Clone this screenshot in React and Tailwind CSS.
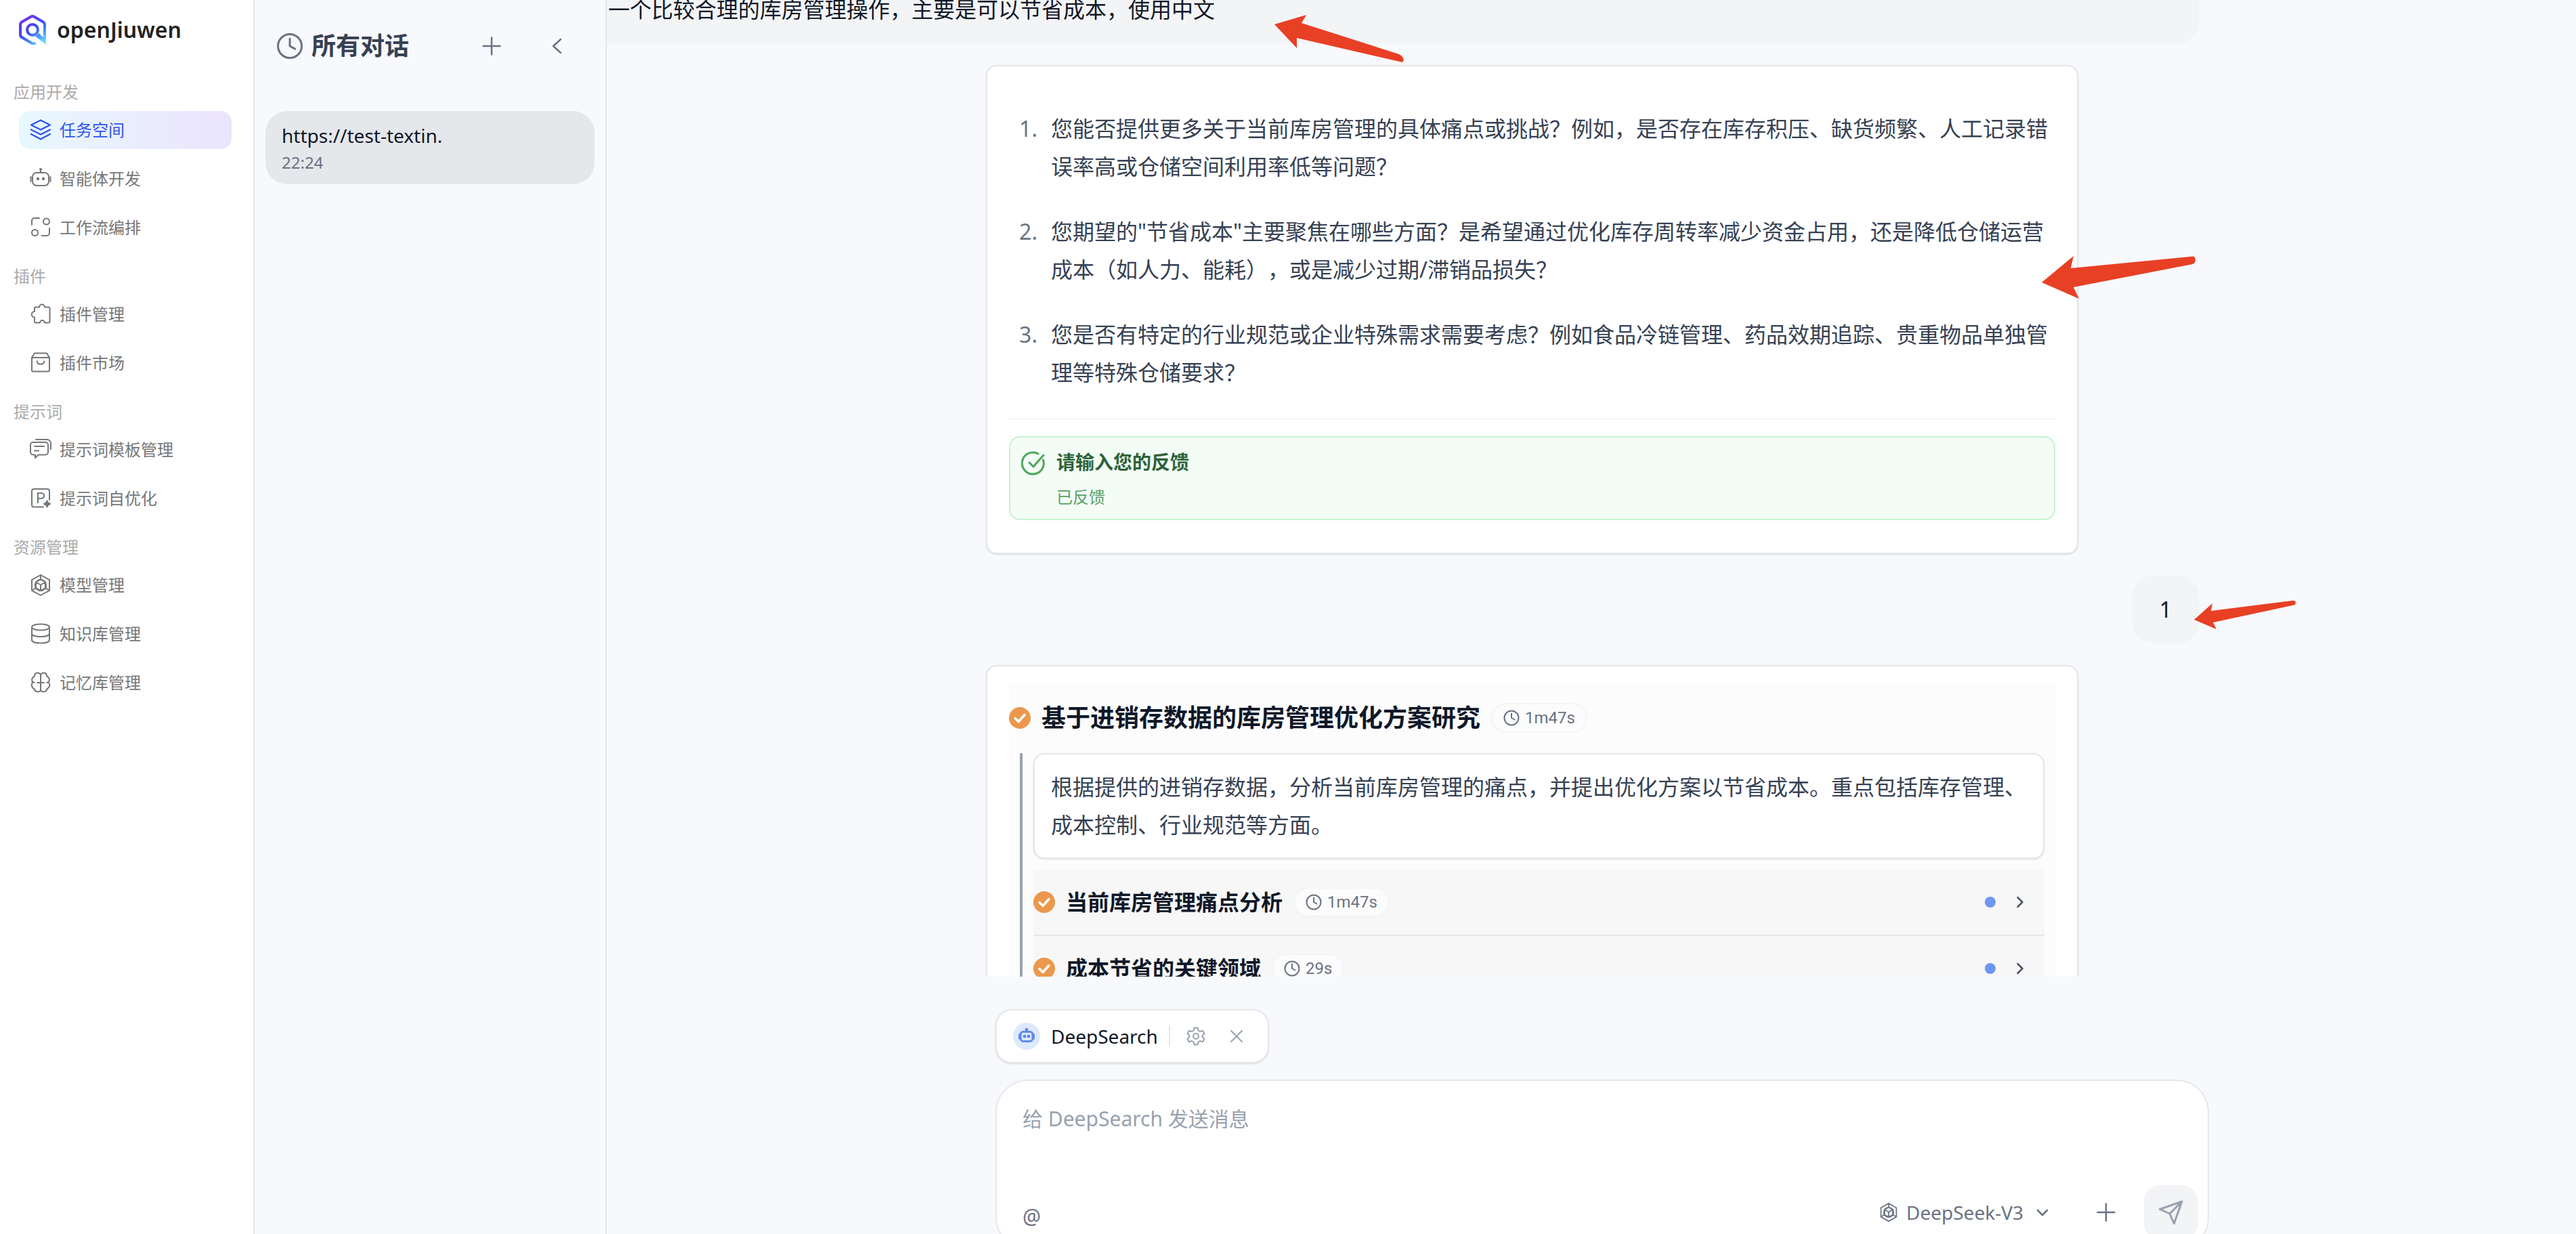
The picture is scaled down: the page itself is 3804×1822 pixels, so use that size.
import { useState } from 'react';
import clsx from 'clsx';

const Icon = ({ className = 'size-8', box = 32, width = 2, children }) => (
  <svg
    className={clsx('shrink-0', className)}
    viewBox={`0 0 ${box} ${box}`}
    fill="none"
    stroke="currentColor"
    strokeWidth={width}
    strokeLinecap="round"
    strokeLinejoin="round"
    aria-hidden="true"
  >
    {children}
  </svg>
);

const LayersIcon = () => (
  <Icon width={2.4}>
    <path d="M16 1.5 30 8.5 16 15.5 2 8.5Z" />
    <path d="m2 15.5 14 7 14-7" />
    <path d="m2 22 14 7.5L30 22" />
  </Icon>
);

const BotIcon = (props) => (
  <Icon {...props}>
    <rect x="4" y="7" width="24" height="19" rx="6" />
    <path d="M16 2v5M1.5 13v7M30.5 13v7" />
    <circle cx="16" cy="2" r="1" fill="currentColor" />
    <rect x="11" y="15" width="2" height="2" />
    <rect x="19" y="15" width="2" height="2" />
  </Icon>
);

const FlowIcon = () => (
  <Icon>
    <path d="M3 12V6a4 4 0 0 1 4-4h7M29 17v7a4 4 0 0 1-4 4h-7" />
    <circle cx="24.5" cy="7" r="4.5" />
    <circle cx="7.5" cy="23.5" r="4.5" />
  </Icon>
);

const PuzzleIcon = () => (
  <Icon>
    <path d="M7 12V7a1.5 1.5 0 0 1 1.5-1.5H14a4 4 0 0 1 8 0h6A1.5 1.5 0 0 1 29.5 7v20a1.5 1.5 0 0 1-1.5 1.5h-6a3.5 3.5 0 0 0-7 0H8.500A1.500 1.500 0 0 1 7 27v-6.500a4.200 4.200 0 0 1 0-8.500Z" />
  </Icon>
);

const StoreIcon = () => (
  <Icon>
    <path d="M3 8v18.500a2 2 0 0 0 2 2h22a2 2 0 0 0 2-2V8l-4-6.500H7Z" />
    <path d="M3 8h26M10.500 13.500c1 5.500 10 5.500 11 0" />
  </Icon>
);

const ChatIcon = () => (
  <Icon>
    <path d="M5 5h18a4 4 0 0 1 4 4v10.500a4 4 0 0 1-4 4H12.500L8 28v-4.500H5a4 4 0 0 1-4-4V9a4 4 0 0 1 4-4Z" />
    <path d="M9 1h16.500A5.500 5.500 0 0 1 31 6.500V15M7 11h14M7 17.500h6" />
  </Icon>
);

const PromptIcon = () => (
  <Icon>
    <path d="M20 28.500H6a3 3 0 0 1-3-3V5a3 3 0 0 1 3-3h20a3 3 0 0 1 3 3v13" />
    <text x="9" y="23" fontSize="22" fontFamily="Roboto" fill="currentColor" stroke="none">P</text>
    <path d="m25.500 19.500 1.500 3 3 1.500-3 1.500-1.500 3-1.500-3-3-1.500 3-1.500Z" fill="currentColor" />
  </Icon>
);

const ModelIcon = (props) => (
  <Icon {...props}>
    <path d="M16 1 29 8.200v15.600L16 31 3 23.800V8.200Z" />
    <path d="M16 7.500 23 11.500v8.500L16 24l-7-4v-8.500ZM9 11.500l7 4 7-4M16 15.500V24M3.500 23.500 9 20M28.500 23.500 23 20M16 1v6" />
    <circle cx="16" cy="16" r="8.500" strokeWidth="1.500" />
  </Icon>
);

const DatabaseIcon = () => (
  <Icon>
    <ellipse cx="16" cy="6" rx="13" ry="4.500" />
    <path d="M3 6v19c0 6 26 6 26 0V6M3 15.500c0 6 26 6 26 0" />
  </Icon>
);

const BrainIcon = () => (
  <Icon>
    <path d="M16 4.500C14-.5 6.500 1 7 6.500 3 8 2 12.500 4.500 15 1.500 18 2.500 23.500 6.500 25c1 5 7.500 6 9.500 2Z" />
    <path d="M16 4.500C18-.5 25.500 1 25 6.500c4 1.500 5 6 2.500 8.500 3 3 2 8.500-2 10-1 5-7.500 6-9.500 2ZM11 16h10M4.500 15l2 1M27.500 15l-2 1" />
  </Icon>
);

const ClockIcon = ({ className = 'size-6', width = 2 }) => (
  <Icon className={className} box={24} width={width}>
    <circle cx="12" cy="12" r="10.500" />
    <path d="M12 5.500V12l4.500 2.500" />
  </Icon>
);

const PlusIcon = ({ className }) => (
  <Icon className={className} box={28} width={2.5}>
    <path d="M14 1.500v25M1.500 14h25" />
  </Icon>
);

const CheckBadge = () => (
  <svg className="size-8 shrink-0" viewBox="0 0 32 32" aria-hidden="true">
    <circle cx="16" cy="16" r="16" fill="#eb984e" />
    <path d="m9 16.500 5 5L23 11.500" fill="none" stroke="#fff" strokeWidth="3.5" strokeLinecap="round" strokeLinejoin="round" />
  </svg>
);

const Logo = () => (
  <svg className="w-10 h-11 shrink-0" viewBox="0 0 40 44" fill="none" aria-hidden="true">
    <defs>
      <linearGradient id="logo" x1="6" y1="4" x2="36" y2="42" gradientUnits="userSpaceOnUse">
        <stop offset="0" stopColor="#7a2cf0" />
        <stop offset="0.45" stopColor="#3b4bf0" />
        <stop offset="0.75" stopColor="#4a9bff" />
        <stop offset="1" stopColor="#6fe6ff" />
      </linearGradient>
    </defs>
    <path d="M38 31V14.500a5 5 0 0 0-2.500-4.300L22.500 2.700a5 5 0 0 0-5 0L4.500 10.200A5 5 0 0 0 2 14.500V29a5 5 0 0 0 2.500 4.300L17.500 41a6 6 0 0 0 7 .5" stroke="url(#logo)" strokeWidth="4" />
    <circle cx="20" cy="22" r="8" stroke="url(#logo)" strokeWidth="4" />
    <path d="M24 31.500 30 27l4 5 6-1v13Z" fill="url(#logo)" />
  </svg>
);

const sections = [
  {
    title: '应用开发',
    items: [
      { label: '任务空间', icon: LayersIcon },
      { label: '智能体开发', icon: BotIcon },
      { label: '工作流编排', icon: FlowIcon },
    ],
  },
  {
    title: '插件',
    items: [
      { label: '插件管理', icon: PuzzleIcon },
      { label: '插件市场', icon: StoreIcon },
    ],
  },
  {
    title: '提示词',
    items: [
      { label: '提示词模板管理', icon: ChatIcon },
      { label: '提示词自优化', icon: PromptIcon },
    ],
  },
  {
    title: '资源管理',
    items: [
      { label: '模型管理', icon: ModelIcon },
      { label: '知识库管理', icon: DatabaseIcon },
      { label: '记忆库管理', icon: BrainIcon },
    ],
  },
];

const questions = [
  '您能否提供更多关于当前库房管理的具体痛点或挑战？例如，是否存在库存积压、缺货频繁、人工记录错误率高或仓储空间利用率低等问题？',
  '您期望的"节省成本"主要聚焦在哪些方面？是希望通过优化库存周转率减少资金占用，还是降低仓储运营成本（如人力、能耗），或是减少过期/滞销品损失？',
  '您是否有特定的行业规范或企业特殊需求需要考虑？例如食品冷链管理、药品效期追踪、贵重物品单独管理等特殊仓储要求？',
];

const steps = [
  { title: '当前库房管理痛点分析', time: '1m47s' },
  { title: '成本节省的关键领域', time: '29s' },
];

const Sidebar = () => {
  const [active, setActive] = useState('任务空间');

  return (
    <aside className="w-[376px] shrink-0 bg-white border-r-2 border-[#e5e7eb]">
      <div className="flex items-center gap-4 h-[120px] px-7 pb-8">
        <Logo />
        <span className="text-[32px] leading-10 font-semibold text-[#222]">openJiuwen</span>
      </div>
      <nav>
        {sections.map(section => (
          <section key={section.title} className="mb-7">
            <h3 className="px-5 mb-3 text-2xl leading-8 text-[#aaa]">{section.title}</h3>
            <ul className="flex flex-col gap-4 pl-7 pr-8">
              {section.items.map(({ label, icon: ItemIcon }) => (
                <li key={label}>
                  <button
                    onClick={() => setActive(label)}
                    className={clsx(
                      'flex items-center gap-3 w-full h-14 px-4 rounded-2xl text-2xl',
                      active === label ? 'bg-linear-to-r from-[#e8f8ff] to-[#ebe4fc] text-[#2f54eb]' : 'text-[#777]'
                    )}
                  >
                    <ItemIcon />
                    {label}
                  </button>
                </li>
              ))}
            </ul>
          </section>
        ))}
      </nav>
    </aside>
  );
};

const HistoryPanel = () => (
  <section className="w-[520px] shrink-0 px-4 border-r-2 border-[#e5e7eb]">
    <header className="flex items-center h-[136px] pl-4 pr-12 mb-7 text-gray-500">
      <ClockIcon className="size-10" width={1.8} />
      <h2 className="ml-3 text-4xl font-bold text-gray-700">所有对话</h2>
      <button className="ml-auto" aria-label="新建对话">
        <PlusIcon className="size-7" />
      </button>
      <button className="ml-[74px]" aria-label="收起">
        <svg className="w-4 h-6" viewBox="0 0 16 24" fill="none" stroke="currentColor" strokeWidth="2.5" strokeLinecap="round" strokeLinejoin="round">
          <path d="M14 2 3 12l11 10" />
        </svg>
      </button>
    </header>
    <a href="#chat" className="block px-6 py-4 rounded-[32px] bg-gray-200">
      <p className="mb-1 text-[28px] leading-10 text-gray-900">https://test-textin.</p>
      <p className="text-2xl leading-8 text-gray-500">22:24</p>
    </a>
  </section>
);

const Duration = ({ time }) => (
  <span className="flex items-center gap-2 h-11 px-4 rounded-full border-2 border-gray-100 bg-[#fcfcfc] font-[Roboto,sans-serif] text-2xl font-normal text-gray-500">
    <ClockIcon />
    {time}
  </span>
);

const QuestionCard = () => (
  <article className="w-9/10 px-8 pt-16 pb-12 mt-8 rounded-2xl border-2 border-gray-200 bg-white shadow-sm">
    <ol className="flex flex-col gap-10 pb-10 border-b-2 border-gray-100 text-[32px] leading-[56px] text-gray-700">
      {questions.map((question, i) => (
        <li key={question} className="flex">
          <span className="w-[42px] mr-5 text-right text-gray-500 shrink-0">{i + 1}.</span>
          <p className="flex-1">{question}</p>
        </li>
      ))}
    </ol>
    <div className="flex gap-4 p-4 mt-6 rounded-2xl border-2 border-[#c6f2d2] bg-[#f3fcf5]">
      <Icon className="size-9 mt-1 text-[#4ba55b]" box={36} width={3}>
        <path d="M32.500 13A16 16 0 1 1 25 4" />
        <path d="m12 17 6 6L33 6" />
      </Icon>
      <div>
        <h4 className="mb-4 text-[28px] leading-10 font-bold text-[#2c6238]">请输入您的反馈</h4>
        <p className="text-2xl leading-8 text-[#57a167]">已反馈</p>
      </div>
    </div>
  </article>
);

const ResearchCard = () => (
  <article className="w-9/10 px-8 py-6 mt-8 shrink-0 rounded-2xl border-2 border-gray-200 bg-white shadow-sm">
    <div className="bg-[#fcfcfc]">
      <header className="flex items-center gap-4 py-6">
        <CheckBadge />
        <h3 className="text-4xl leading-[56px] font-bold text-gray-900">基于进销存数据的库房管理优化方案研究</h3>
        <Duration time="1m47s" />
      </header>
      <div className="ml-4 mr-4 pl-4 border-l-4 border-gray-400">
        <p className="px-6 py-5 mb-4 rounded-2xl border-2 border-gray-200 bg-white shadow-sm text-[32px] leading-[56px] text-gray-700">
          根据提供的进销存数据，分析当前库房管理的痛点，并提出优化方案以节省成本。重点包括库存管理、成本控制、行业规范等方面。
        </p>
        {steps.map(step => (
          <button key={step.title} className="flex items-center gap-4 w-full py-5 pr-5 border-b-2 border-gray-200 bg-[#f7f7f7] text-left">
            <CheckBadge />
            <span className="text-[32px] leading-[56px] font-bold text-gray-900">{step.title}</span>
            <Duration time={step.time} />
            <span className="size-4 ml-auto rounded-full bg-[#6d97f0]" />
            <Icon className="size-8 ml-1 text-gray-600" width={2.5}>
              <path d="m12.500 9 7 7-7 7" />
            </Icon>
          </button>
        ))}
      </div>
    </div>
  </article>
);

const Composer = () => {
  const [message, setMessage] = useState('');

  return (
    <div className="shrink-0 pt-12 pl-8 -mb-6 relative">
      <div className="w-full max-w-[1792px] mx-auto">
        <div className="inline-flex items-center gap-4 h-20 px-6 rounded-3xl border-2 border-gray-200 bg-white shadow-sm text-gray-400">
          <span className="flex items-center justify-center size-10 rounded-full bg-[#dde9fc] text-[#6088ec]">
            <BotIcon className="size-6" width={4} />
          </span>
          <span className="text-[28px] text-gray-900">DeepSearch</span>
          <span className="w-0.5 h-8 bg-gray-200" />
          <button className="p-2" aria-label="设置">
            <Icon className="size-7" box={28}>
              <path d="M11.500 1.500h5l1 4 2.500 1.500 4-1.200 2.500 4.300-3 2.800v2.200l3 2.800-2.500 4.300-4-1.200-2.500 1.500-1 4h-5l-1-4L8 21l-4 1.200-2.500-4.300 3-2.800v-2.200l-3-2.800L4 5.800 8 7l2.500-1.500Z" />
              <circle cx="14" cy="14" r="4" />
            </Icon>
          </button>
          <button className="p-2" aria-label="关闭">
            <Icon className="size-7" box={28}>
              <path d="m6 6 16 16M22 6 6 22" />
            </Icon>
          </button>
        </div>
        <form className="flex flex-col h-[252px] mt-6 p-3.5 rounded-[48px] border-2 border-gray-200 bg-white">
          <textarea
            className="flex-1 w-full px-6 pt-5 resize-none outline-none text-[30px] leading-[44px] text-gray-900 placeholder:text-gray-400"
            placeholder="给 DeepSearch 发送消息"
            aria-label="消息"
            value={message}
            onChange={(e) => setMessage(e.target.value)}
          />
          <div className="flex items-center text-gray-500">
            <button type="button" className="pl-6 pt-3 text-[30px] leading-10">@</button>
            <button type="button" className="flex items-center gap-3 ml-auto text-[28px]">
              <ModelIcon className="size-7" />
              DeepSeek-V3
              <Icon className="size-8" width={2.5}>
                <path d="m9 13 7 7 7-7" />
              </Icon>
            </button>
            <button type="button" className="ml-16" aria-label="添加附件">
              <PlusIcon className="size-7" />
            </button>
            <button type="submit" className="flex items-center justify-center size-20 ml-[42px] rounded-3xl bg-gray-100 text-gray-400" aria-label="发送">
              <Icon className="size-9" box={36} width={3}>
                <path d="M34 2 1.500 13.500 16 20l6.500 14.500ZM34 2 16 20" />
              </Icon>
            </button>
          </div>
        </form>
      </div>
    </div>
  );
};

// hand-drawn markers pointing at the conversation
const Arrow = ({ className, box, d }) => (
  <svg className={clsx('absolute pointer-events-none', className)} viewBox={box} fill="#e84025" aria-hidden="true">
    <path d={d} />
  </svg>
);

export default function App() {
  return (
    <div className="flex h-screen overflow-hidden bg-[#f8f9fd] font-['Noto_Sans','Noto_Sans_CJK_SC',sans-serif] [text-spacing-trim:space-all]">
      <Sidebar />
      <HistoryPanel />
      <main className="relative flex flex-col flex-1 min-w-0 overflow-hidden">
        <div className="flex flex-col flex-1 min-h-0 overflow-hidden">
          <div className="shrink-0 -mt-9 mr-[calc(50%-898px)] pl-0.5 py-6 rounded-br-[32px] bg-gray-100 text-[32px] leading-[52px] text-gray-900">
            一个比较合理的库房管理操作，主要是可以节省成本，使用中文
          </div>
          <div className="w-full pl-1">
            <div className="flex flex-col w-full max-w-[1792px] mx-auto">
              <QuestionCard />
              <div className="self-end min-w-[100px] mt-8 px-10 py-6 rounded-[32px] bg-gray-100 text-center text-[32px] leading-[52px] text-gray-900">1</div>
              <ResearchCard />
            </div>
          </div>
        </div>
        <Composer />
        <Arrow
          className="left-[986px] top-[22px] w-[192px] h-[71px]"
          box="1882 22 192 71"
          d="M1882 36 1929 22 1922 34 2066 80Q2076 86 2071 92L1915 56V71Z"
        />
        <Arrow
          className="left-[2119px] top-[377px] w-[228px] h-[65px]"
          box="3015 377 228 65"
          d="M3015 417 3062 378 3058 396 3234 379Q3242 377 3242 384 3242 388 3238 390L3062 424 3070 441Z"
        />
        <Arrow
          className="left-[2344px] top-[886px] w-[151px] h-[44px]"
          box="3240 886 151 44"
          d="M3240 915 3267 891 3265 902 3384 887Q3390 886 3390 890 3390 893 3387 893.500L3268 919 3273 929Z"
        />
      </main>
    </div>
  );
}
